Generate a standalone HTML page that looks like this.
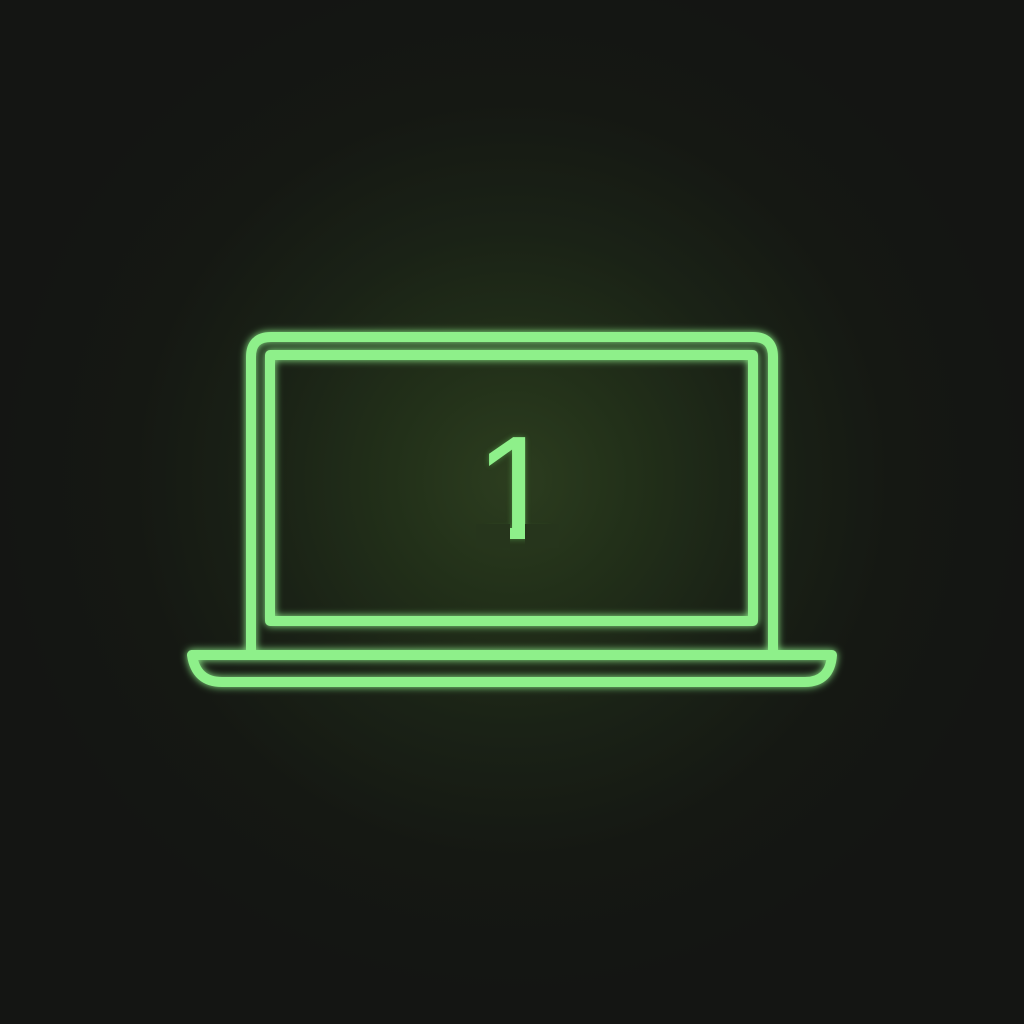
<!DOCTYPE html>
<html><head><style>
html,body{margin:0;padding:0;width:1024px;height:1024px;overflow:hidden;background:#141513;}
.bg{position:absolute;inset:0;background:radial-gradient(circle at 512px 480px,#2c3d1f 0px,#223019 120px,#1a2216 250px,#151813 380px,#141513 520px);}
svg{position:absolute;left:0;top:0}
.one{position:absolute;left:0;width:1024px;top:404px;text-align:center;font-family:"Liberation Sans",sans-serif;font-size:148px;line-height:170px;color:#8ef08a;text-shadow:0 0 6px rgba(120,240,110,.4);padding-left:8px;box-sizing:border-box}
.m{position:absolute;background:#26351c;}
</style></head><body>
<div class="bg"></div>
<svg width="1024" height="1024" viewBox="0 0 1024 1024">
<defs><filter id="g" x="-20%" y="-20%" width="140%" height="140%"><feGaussianBlur stdDeviation="4" result="b"/><feMerge><feMergeNode in="b"/><feMergeNode in="SourceGraphic"/></feMerge></filter></defs>
<g fill="none" stroke="#8ef08a" stroke-width="10" stroke-linecap="round" stroke-linejoin="round" filter="url(#g)">
<path d="M251 652 V357 Q251 337 271 337 H753 Q773 337 773 357 V652"/>
<rect x="270" y="355" width="483" height="266"/>
<path d="M192 655 H832 Q830 682 805 682 H222 Q196 682 192 655 Z"/>
</g>
</svg>
<div class="one">1</div>
<div class="m" style="left:476px;top:524px;width:34px;height:24px"></div>
<div class="m" style="left:525px;top:524px;width:34px;height:24px"></div>
</body></html>
